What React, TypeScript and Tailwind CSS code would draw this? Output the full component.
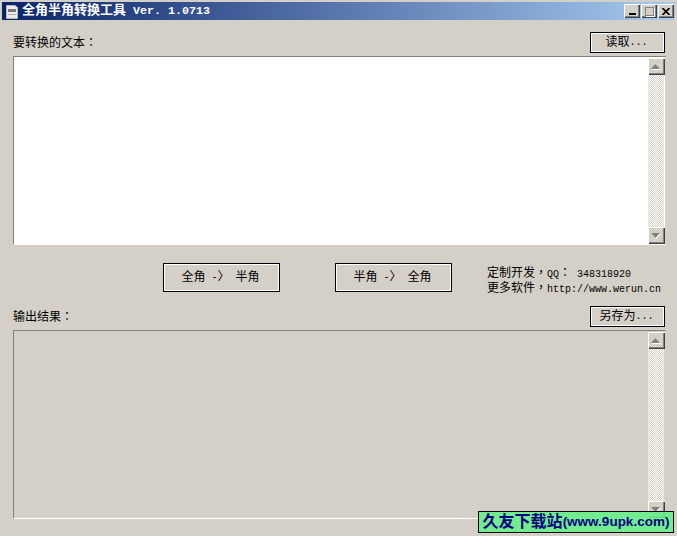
const CJK = "font-['Liberation_Mono','Noto_Sans_CJK_SC',monospace]";
const PUNCT = "font-['Noto_Sans_CJK_TC',sans-serif]";

function Btn({ children, className }: { children: React.ReactNode; className: string }) {
  return (
    <div className={`flex items-center justify-center border border-black bg-[#d4d0c8] pr-[2px] text-[12px] leading-none whitespace-pre text-black shadow-[inset_1px_1px_#fff,inset_-1px_-1px_#fff] ${className}`}>
      {children}
    </div>
  );
}

function Small({ children }: { children: React.ReactNode }) {
  return <span className="text-[10px]">{children}</span>;
}

function ScrollBtn({ up }: { up: boolean }) {
  return (
    <div className="flex h-[17px] w-[17px] shrink-0 items-center justify-center bg-[#d4d0c8] shadow-[inset_1px_1px_#fff,inset_-1px_-1px_#404040,inset_-2px_-2px_#808080]">
      <svg width="10" height="6" viewBox="0 0 10 6">
        <path d={up ? "M5 1 L10 6 H1 Z" : "M1 1 H10 L5 6 Z"} fill="#fff" />
        <path d={up ? "M4.5 0 L9 5 H0 Z" : "M0 0 H9 L4.5 5 Z"} fill="#808080" />
      </svg>
    </div>
  );
}

function Area({ className }: { className: string }) {
  return (
    <div className={`flex w-[653px] justify-end border-t border-l border-t-[#808080] border-l-[#808080] border-b border-r border-b-white border-r-[#d4d0c8] pt-px pr-px ${className}`}>
      <div className="flex w-[16px] flex-col items-center overflow-visible bg-[repeating-conic-gradient(#d4d0c8_0_25%,#fff_0_50%)] bg-[length:2px_2px]">
        <ScrollBtn up />
        <div className="flex-1" />
        <ScrollBtn up={false} />
      </div>
    </div>
  );
}

function Caption({ children }: { children: React.ReactNode }) {
  return (
    <div className="flex h-[14px] w-[16px] items-center justify-center bg-[#d4d0c8] shadow-[inset_1px_1px_#fff,inset_-1px_-1px_#404040,inset_-2px_-2px_#808080]">
      {children}
    </div>
  );
}

export default function App() {
  return (
    <div className={`relative flex h-[536px] w-[677px] flex-col overflow-hidden bg-[#d4d0c8] pt-[2px] pr-[2px] pb-[3px] pl-[2px] text-black ${CJK}`}>
      <div className="flex h-[18px] shrink-0 items-center bg-[linear-gradient(90deg,#0a246a,#a6caf0)] pr-[1px] pl-[3px]">
        <svg width="14" height="16" viewBox="0 0 14 16">
          <path d="M1.5 2.5 H10 L12.5 4.5 V15.5 H1.5 Z" fill="#ececec" stroke="#b5b5b5" />
          <rect x="3" y="6" width="8" height="3" fill="#7a7a7a" />
          <rect x="3" y="11" width="8" height="1" fill="#b0b0b0" />
        </svg>
        <span className="ml-[3px] text-[13px] leading-none font-bold whitespace-pre text-white">
          全角半角转换工具<span className="ml-[7px] text-[11.67px]">Ver. 1.0713</span>
        </span>
        <div className="ml-auto flex gap-[1px]">
          <Caption>
            <div className="mt-[5px] h-[2px] w-[7px] bg-black" />
          </Caption>
          <Caption>
            <div className="h-[9px] w-[9px] border border-[#808080] shadow-[1px_1px_#fff]" />
          </Caption>
          <Caption>
            <svg width="8" height="7" viewBox="0 0 8 7">
              <path d="M0.5 0 L7.5 7 M7.5 0 L0.5 7" stroke="#000" strokeWidth="1.6" />
            </svg>
          </Caption>
        </div>
      </div>

      <div className="flex flex-1 flex-col pl-[11px]">
        <div className="mt-[12px] flex h-[21px] items-center justify-between pr-[10px]">
          <span className="pt-[1px] text-[12px] leading-none">要转换的文本<span className={PUNCT}>：</span></span>
          <Btn className="h-[21px] w-[75px]">读取<Small>...</Small></Btn>
        </div>
        <Area className="mt-[3px] h-[189px] bg-white" />

        <div className="mt-[18px] flex h-[29px] items-center">
          <Btn className="ml-[150px] h-[29px] w-[117px]">全角<Small> -</Small>〉<Small> </Small>半角</Btn>
          <Btn className="ml-[55px] h-[29px] w-[117px]">半角<Small> -</Small>〉<Small> </Small>全角</Btn>
          <div className="ml-[35px] flex flex-col gap-[1px] pt-[4px] text-[12px] leading-[14px] whitespace-pre">
            <div className="h-[14px]">定制开发<span className={PUNCT}>，</span><Small>QQ</Small><span className={PUNCT}>：</span><Small> 348318920</Small></div>
            <div className="h-[14px]">更多软件<span className={PUNCT}>，</span><Small>http://www.werun.cn</Small></div>
          </div>
        </div>

        <div className="mt-[14px] flex h-[21px] items-center justify-between pr-[10px]">
          <span className="pt-[1px] text-[12px] leading-none">输出结果<span className={PUNCT}>：</span></span>
          <Btn className="h-[21px] w-[75px]">另存为<Small>...</Small></Btn>
        </div>
        <Area className="mt-[3px] h-[189px]" />
      </div>

      <div className="absolute top-[511px] left-[478px] flex h-[22px] w-[196px] items-center justify-center border border-black bg-[#66ee88]/90 leading-none font-bold whitespace-pre text-[#000080] font-['Liberation_Sans','Noto_Sans_CJK_SC',sans-serif]">
        <span className="text-[16px]">久友下载站</span>
        <span className="text-[13.5px]">(www.9upk.com)</span>
      </div>
    </div>
  );
}
